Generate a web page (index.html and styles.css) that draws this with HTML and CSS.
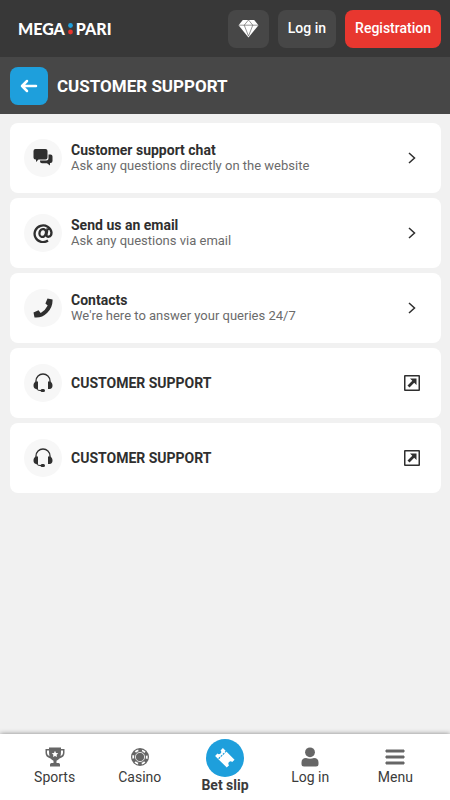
FILE: index.html
```html
<!DOCTYPE html>
<html lang="en">
<head>
<meta charset="utf-8">
<meta name="viewport" content="width=device-width, initial-scale=1">
<title>Customer support</title>
<link rel="stylesheet" href="styles.css">
</head>
<body>
<svg class="defs" aria-hidden="true">
  <symbol id="chevron" viewBox="0 0 8 12"><path d="M1 1l5.500 5L1 11" fill="none" stroke="currentColor" stroke-width="1.500"/></symbol>
  <symbol id="external" viewBox="0 0 16 16"><path fill-rule="evenodd" d="M1 0h14q1 0 1 1v14q0 1-1 1H1q-1 0-1-1V1q0-1 1-1zM1.500 1.500v13h13v-13zM6 3.500h6.500V10l-2.300-2.300-4.700 4.800-2-2 4.800-4.700z" fill="currentColor"/></symbol>
  <symbol id="headset" viewBox="0 0 20 20"><path d="M3 9V8a7 7 0 0 1 14 0v1" fill="none" stroke="currentColor" stroke-width="1.300"/><path d="M5 8.500v7.500H3.500C1.500 16 .5 14.500.5 12.500S1.500 9 3 8.500zM15 8.500v7.500h1.500c2 0 3-1.500 3-3.500S18.500 9 17 8.500z" fill="currentColor"/><path d="M3.500 15.500Q4 17.500 7 17.500h2" fill="none" stroke="currentColor"/><rect x="7.500" y="16" width="4.500" height="3" rx="1.500" fill="currentColor"/></symbol>
</svg>
<header class="topbar">
  <a class="logo" href="#" aria-label="MEGAPARI"><span>MEGA</span><svg viewBox="0 0 5 12" aria-hidden="true"><circle cx="2.500" cy="2.500" r="2.400" fill="#1e9fdc"/><circle cx="2.500" cy="9" r="2.400" fill="#e8352e"/></svg><span>PARI</span></a>
  <button class="btn" type="button" aria-label="Bonuses"><svg class="gem" viewBox="0 0 22 20" aria-hidden="true"><path d="M5 1h12l4.500 5.500L11 19.500.5 6.500z" fill="#fff"/><path d="M.5 6.500h21M11 1L6.500 6.500 11 18l4.500-11.500L11 1" fill="none" stroke="#474747" stroke-width=".6"/></svg></button>
  <button class="btn" type="button">Log in</button>
  <button class="btn primary" type="button">Registration</button>
</header>
<div class="titlebar">
  <button class="back" type="button" aria-label="Back"><svg viewBox="0 0 18 14" aria-hidden="true"><path d="M16 7H2M7 2L2 7l5 5" fill="none" stroke="#fff" stroke-width="2.500" stroke-linecap="round" stroke-linejoin="round"/></svg></button>
  <h1>CUSTOMER SUPPORT</h1>
</div>
<main class="list">
  <a class="card" href="#">
    <span class="badge"><svg viewBox="0 0 20 20" aria-hidden="true"><path d="M2.500 1h10q2 0 2 2v6.500q0 2-2 2H5.500L3 14v-2.500H2.500q-2 0-2-2V3q0-2 2-2z" fill="currentColor"/><path d="M15.500 6.500h2q2 0 2 2V13q0 2-2 2h-.5v2.500L14 15.300H9q-2 0-2-2v-.8h6.500q2 0 2-2z" fill="currentColor"/></svg></span>
    <span class="text"><strong>Customer support chat</strong><span>Ask any questions directly on the website</span></span>
    <svg class="chevron" aria-hidden="true"><use href="#chevron"/></svg>
  </a>
  <a class="card" href="#">
    <span class="badge"><svg viewBox="0 0 20 20" aria-hidden="true"><g fill="none" stroke="currentColor" stroke-width="2.300"><path d="M15 17.500A8.500 8.300 0 1 1 18.500 9.500c0 5-5.500 5.500-5 2l1-6"/><ellipse cx="9.700" cy="10" rx="3.200" ry="4" transform="rotate(15 9.700 10)"/></g></svg></span>
    <span class="text"><strong>Send us an email</strong><span>Ask any questions via email</span></span>
    <svg class="chevron" aria-hidden="true"><use href="#chevron"/></svg>
  </a>
  <a class="card" href="#">
    <span class="badge"><svg viewBox="0 0 20 20" aria-hidden="true"><path d="M14.500.5l5 1q.500 7.500-5.200 13.200T1.500 19.500L.5 14.500l5-2.200 2.200 2.600q4.800-2.500 7-7.300l-2.300-2.100z" fill="currentColor"/></svg></span>
    <span class="text"><strong>Contacts</strong><span>We're here to answer your queries 24/7</span></span>
    <svg class="chevron" aria-hidden="true"><use href="#chevron"/></svg>
  </a>
  <a class="card" href="#">
    <span class="badge"><svg aria-hidden="true"><use href="#headset"/></svg></span>
    <span class="text"><strong>CUSTOMER SUPPORT</strong></span>
    <svg class="external" aria-hidden="true"><use href="#external"/></svg>
  </a>
  <a class="card" href="#">
    <span class="badge"><svg aria-hidden="true"><use href="#headset"/></svg></span>
    <span class="text"><strong>CUSTOMER SUPPORT</strong></span>
    <svg class="external" aria-hidden="true"><use href="#external"/></svg>
  </a>
</main>
<nav class="tabs">
  <a href="#"><svg viewBox="0 0 20 20" aria-hidden="true"><path d="M4 .5h12V2h3.500v4q0 4-5 5.500-1.300 1.500-3 2.200V16h2q1.500 0 1.500 1.500v2H5v-2Q5 16 6.500 16h2v-2.300q-1.700-.7-3-2.200Q.5 10 .5 6V2H4zM4 3.500H2V6q0 2 2.500 3.200Q4 7.500 4 3.500zm12 0q0 4-.5 5.700Q18 8 18 6V3.500z" fill="currentColor"/><path d="M10 3.800l1 2.100 2.300.3-1.700 1.600.4 2.300-2-1.100-2 1.100.4-2.300-1.700-1.600 2.300-.3z" fill="#fff"/></svg><span>Sports</span></a>
  <a href="#"><svg viewBox="0 0 20 20" aria-hidden="true"><circle cx="10" cy="10" r="9" fill="currentColor"/><circle cx="10" cy="10" r="6.800" fill="none" stroke="#fff" stroke-width="1.800" stroke-dasharray="3.400 3.720" stroke-dashoffset="1.700"/><circle cx="10" cy="10" r="4.600" fill="currentColor" stroke="#fff" stroke-width=".8"/></svg><span>Casino</span></a>
  <a class="current" href="#"><span class="disc"><svg viewBox="0 0 20 20" aria-hidden="true"><g transform="rotate(45 10 10)"><path d="M1.500 4.500H18v3.300a2.200 2.200 0 0 0 0 4.400v3.300H1.500v-3.300a2.200 2.200 0 0 0 0-4.400z" fill="#fff"/><path d="M6 4v12" stroke="#1e9fdc" stroke-width="1.200" stroke-dasharray="2 1"/></g></svg></span><span>Bet slip</span></a>
  <a href="#"><svg viewBox="0 0 20 20" aria-hidden="true"><circle cx="10" cy="5.300" r="4.900" fill="currentColor"/><path d="M1.500 17v-1.500q0-4.500 4.500-4.500 4 1.500 8 0 4.500 0 4.500 4.500V17q0 2.500-2.500 2.500H4Q1.500 19.500 1.500 17z" fill="currentColor"/></svg><span>Log in</span></a>
  <a href="#"><svg viewBox="0 0 20 20" aria-hidden="true"><path d="M1 3h18v2H1zM1 9h18v2H1zM1 15h18v2H1z" fill="currentColor" stroke="currentColor" stroke-linejoin="round"/></svg><span>Menu</span></a>
</nav>
</body>
</html>
```
FILE: styles.css
```css
* { box-sizing: border-box; }
body {
  margin: 0;
  min-height: 100vh;
  display: flex;
  flex-direction: column;
  background: #f1f1f1;
  color: #2f2f2f;
  font: 14px/16px Roboto, sans-serif;
}
a { color: inherit; text-decoration: none; }
button { border: 0; font: inherit; color: #fff; cursor: pointer; }
svg { display: block; flex: none; }
.defs { position: absolute; width: 0; height: 0; }

.topbar {
  display: flex;
  align-items: center;
  gap: 9px;
  padding: 10px 9px 9px 18px;
  background: #383838;
}
.logo {
  display: flex;
  align-items: center;
  gap: 3px;
  margin-right: auto;
  color: #fff;
  font: 900 16px/18px Lato, sans-serif;
}
.logo svg { width: 5px; height: 12px; }
.btn {
  display: flex;
  align-items: center;
  height: 38px;
  padding: 0 10px 2px;
  border-radius: 8px;
  background: #474747;
  font-weight: 500;
  line-height: 18px;
}
.primary { background: #e8372f; }
.gem { width: 21px; height: 19px; }

.titlebar {
  display: flex;
  align-items: center;
  gap: 9px;
  padding: 10px 10px 9px;
  background: #474747;
}
.back {
  display: grid;
  place-items: center;
  width: 38px;
  height: 38px;
  padding: 0;
  border-radius: 8px;
  background: #1e9fdc;
}
.back svg { width: 18px; height: 14px; }
h1 { margin: 0; color: #fff; font-size: 17px; line-height: 20px; font-weight: 700; }

.list {
  flex: 1;
  display: flex;
  flex-direction: column;
  gap: 5px;
  padding: 9px 9px 9px 10px;
}
.card {
  display: flex;
  align-items: center;
  min-height: 70px;
  padding: 0 21px 0 14px;
  border-radius: 8px;
  background: #fff;
}
.badge {
  display: grid;
  place-items: center;
  flex: none;
  width: 38px;
  height: 38px;
  margin-right: 9px;
  border-radius: 50%;
  background: #f7f7f7;
}
.badge svg { width: 20px; height: 20px; }
.text { flex: 1; display: flex; flex-direction: column; }
.text strong { font-weight: 700; }
.text span { color: #6b6b6b; font-size: 13px; }
.chevron { width: 8px; height: 12px; margin-right: 4px; }
.external { width: 16px; height: 16px; }

.tabs {
  position: sticky;
  bottom: 0;
  display: grid;
  grid-template-columns: repeat(5, 1fr);
  height: 66px;
  padding: 5px 12px 0;
  background: #fff;
  box-shadow: 0 0 5px rgba(0, 0, 0, .45);
}
.tabs a {
  display: flex;
  flex-direction: column;
  align-items: center;
  gap: 2px;
  padding-top: 8px;
  color: #666;
}
.tabs svg { width: 20px; height: 20px; }
.tabs span { color: #3b3b3b; }
.tabs .current { gap: 0; padding-top: 0; font-weight: 700; }
.disc {
  display: grid;
  place-items: center;
  width: 38px;
  height: 38px;
  border-radius: 50%;
  background: #1e9fdc;
}
```
